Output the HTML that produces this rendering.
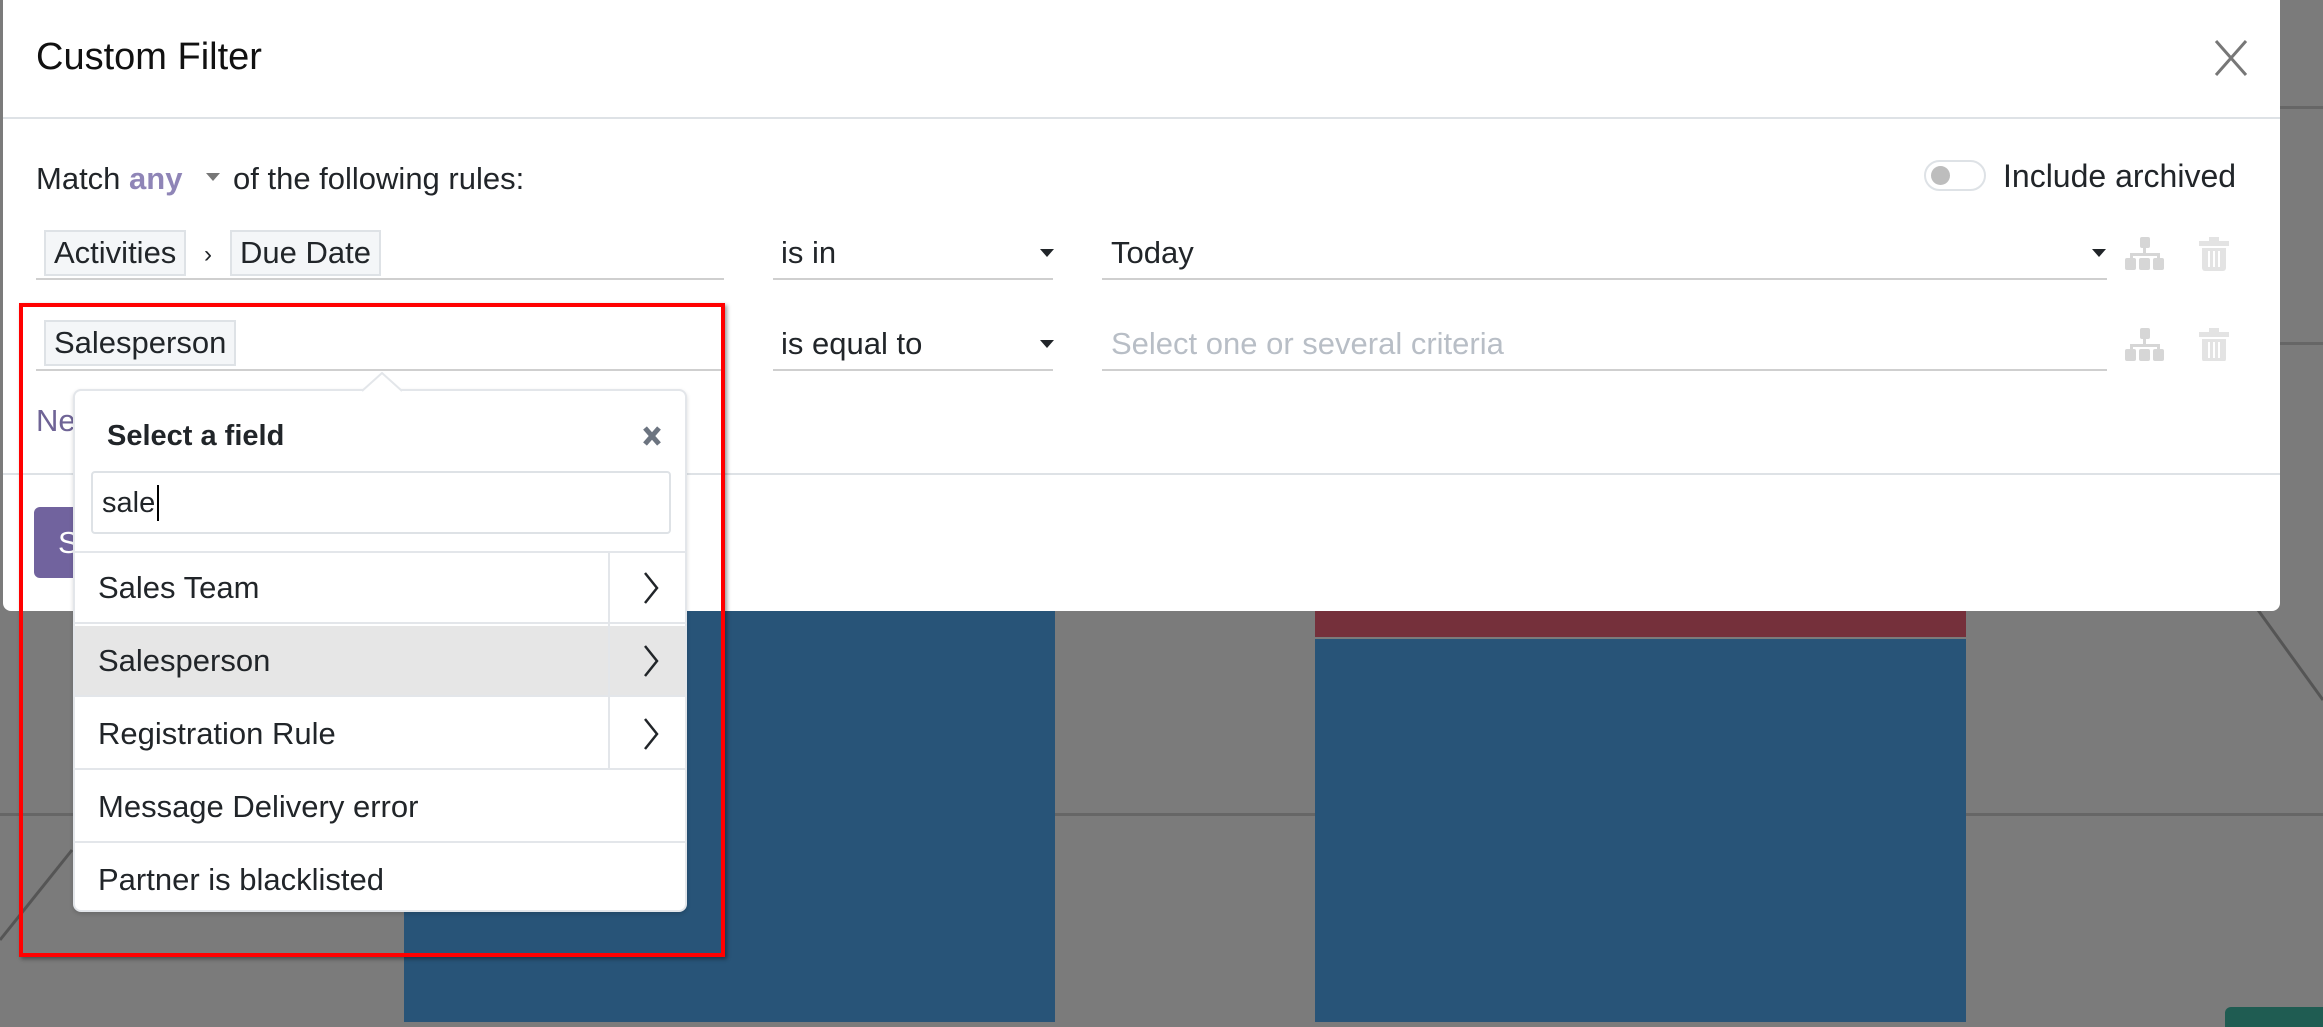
<!DOCTYPE html>
<html><head><meta charset="utf-8"><style>
*{box-sizing:border-box;margin:0;padding:0}
body{width:2323px;height:1022px;background:#7b7b7b;position:relative;overflow:hidden;font-family:"Liberation Sans",sans-serif;color:#212529}
.a{position:absolute}
.t{position:absolute;white-space:nowrap;line-height:1}
.tag{position:absolute;background:#f4f6f8;border:2px solid #dee2e6;font-size:31px;line-height:42px;padding:0 8px;white-space:nowrap}
.ul{position:absolute;height:2px;background:#cfcfcf}
.tri{position:absolute;width:0;height:0;border-left:7px solid transparent;border-right:7px solid transparent;border-top:8px solid #212529}
.item{position:absolute;left:0;width:613px;height:71px;border-bottom:2px solid #e3e6ea;font-size:31px;padding-left:23px;line-height:70px}
</style></head><body>
<!-- background chart -->
<div class="a" style="left:0;top:813px;width:2323px;height:3px;background:#666"></div>
<div class="a" style="left:2280px;top:342px;width:43px;height:3px;background:#666"></div>
<div class="a" style="left:2280px;top:106px;width:43px;height:3px;background:#666"></div>
<div class="a" style="left:404px;top:610px;width:651px;height:412px;background:#285478"></div>
<div class="a" style="left:1315px;top:610px;width:651px;height:27px;background:#75303b"></div>
<div class="a" style="left:1315px;top:639px;width:651px;height:383px;background:#285478"></div>
<div class="a" style="left:2225px;top:1007px;width:98px;height:20px;background:#1f5c52;border-radius:6px 0 0 0"></div>
<svg class="a" style="left:0;top:0" width="2323" height="1022"><line x1="0" y1="940" x2="72" y2="850" stroke="#555" stroke-width="3"/><line x1="2258" y1="610" x2="2323" y2="700" stroke="#555" stroke-width="3"/></svg>

<!-- modal -->
<div class="a" style="left:3px;top:0;width:2277px;height:611px;background:#fff;border-radius:0 0 8px 8px"></div>
<div class="t" style="left:36px;top:38px;font-size:38px;color:#111">Custom Filter</div>
<svg class="a" style="left:2213px;top:40px" width="36" height="36"><path d="M3 1L33 35M33 1L3 35" stroke="#777" stroke-width="3"/></svg>
<div class="a" style="left:3px;top:117px;width:2277px;height:2px;background:#dee2e6"></div>

<div class="t" style="left:36px;top:163px;font-size:31px">Match <b style="color:#8f85b7">any</b></div>
<div class="tri" style="left:206px;top:173px;border-top-color:#777"></div>
<div class="t" style="left:233px;top:163px;font-size:31px">of the following rules:</div>

<div class="a" style="left:1924px;top:160px;width:62px;height:31px;border:2px solid #dee2e6;border-radius:16px"></div>
<div class="a" style="left:1931px;top:166px;width:19px;height:19px;border-radius:50%;background:#bdbdbd"></div>
<div class="t" style="left:2003px;top:160px;font-size:32px">Include archived</div>

<!-- row1 -->
<div class="tag" style="left:44px;top:230px">Activities</div>
<div class="t" style="left:204px;top:243px;font-size:24px">›</div>
<div class="tag" style="left:230px;top:230px">Due Date</div>
<div class="ul" style="left:36px;top:278px;width:688px"></div>
<div class="t" style="left:781px;top:237px;font-size:31px">is in</div>
<div class="tri" style="left:1040px;top:249px"></div>
<div class="ul" style="left:773px;top:278px;width:280px"></div>
<div class="t" style="left:1111px;top:237px;font-size:31px">Today</div>
<div class="tri" style="left:2092px;top:249px"></div>
<div class="ul" style="left:1102px;top:278px;width:1005px"></div>

<!-- row2 -->
<div class="tag" style="left:44px;top:320px">Salesperson</div>
<div class="ul" style="left:36px;top:369px;width:688px"></div>
<div class="t" style="left:781px;top:328px;font-size:31px">is equal to</div>
<div class="tri" style="left:1040px;top:340px"></div>
<div class="ul" style="left:773px;top:369px;width:280px"></div>
<div class="t" style="left:1111px;top:328px;font-size:31px;color:#b8bec6">Select one or several criteria</div>
<div class="ul" style="left:1102px;top:369px;width:1005px"></div>

<!-- icons -->
<svg class="a" style="left:2125px;top:237px" width="40" height="124">
<g fill="#d6d6d6"><rect x="15" y="0" width="10" height="11" rx="2"/><rect x="18" y="10" width="3" height="8"/><rect x="5" y="16" width="30" height="3"/><rect x="5" y="16" width="3" height="6"/><rect x="32" y="16" width="3" height="6"/>
<rect x="0" y="21" width="11" height="12" rx="2"/><rect x="14" y="21" width="11" height="12" rx="2"/><rect x="28" y="21" width="11" height="12" rx="2"/></g>
<g fill="#d6d6d6" transform="translate(0,91)"><rect x="15" y="0" width="10" height="11" rx="2"/><rect x="18" y="10" width="3" height="8"/><rect x="5" y="16" width="30" height="3"/><rect x="5" y="16" width="3" height="6"/><rect x="32" y="16" width="3" height="6"/>
<rect x="0" y="21" width="11" height="12" rx="2"/><rect x="14" y="21" width="11" height="12" rx="2"/><rect x="28" y="21" width="11" height="12" rx="2"/></g></svg>
<svg class="a" style="left:2199px;top:237px" width="32" height="124">
<g fill="#e3e3e3"><path d="M10 0h10v4h10v5H0V4h10z"/><path d="M3 11h24v20a3 3 0 0 1-3 3H6a3 3 0 0 1-3-3z"/></g><g fill="#fff"><rect x="9" y="14" width="2" height="16"/><rect x="14" y="14" width="2" height="16"/><rect x="19" y="14" width="2" height="16"/></g>
<g transform="translate(0,91)"><g fill="#e3e3e3"><path d="M10 0h10v4h10v5H0V4h10z"/><path d="M3 11h24v20a3 3 0 0 1-3 3H6a3 3 0 0 1-3-3z"/></g><g fill="#fff"><rect x="9" y="14" width="2" height="16"/><rect x="14" y="14" width="2" height="16"/><rect x="19" y="14" width="2" height="16"/></g></g></svg>

<div class="t" style="left:36px;top:405px;font-size:31px;color:#6f6496">New Rule</div>
<div class="a" style="left:3px;top:473px;width:2277px;height:2px;background:#dee2e6"></div>
<div class="a" style="left:34px;top:507px;width:160px;height:71px;background:#71639e;border-radius:6px"></div>
<div class="t" style="left:58px;top:527px;font-size:31px;color:#fff">Search</div>

<!-- red highlight -->
<div class="a" style="left:19px;top:303px;width:706px;height:654px;border:4px solid #f00;box-shadow:2px 2px 4px rgba(0,0,0,.4)"></div>

<!-- popover -->
<div class="a" style="left:73px;top:389px;width:614px;height:523px;background:#fff;border:2px solid #e3e6ea;border-radius:8px;box-shadow:0 2px 4px rgba(0,0,0,.15);overflow:hidden">
 <div class="t" style="left:32px;top:31px;font-size:29px;font-weight:bold">Select a field</div>
 <svg class="a" style="left:567px;top:34px" width="20" height="22"><path d="M3 3L17 19M17 3L3 19" stroke="#6c7480" stroke-width="5"/></svg>
 <div class="a" style="left:16px;top:80px;width:580px;height:63px;border:2px solid #dee2e6;border-radius:4px"></div>
 <div class="t" style="left:27px;top:98px;font-size:29px">sale</div>
 <div class="a" style="left:82px;top:94px;width:2px;height:36px;background:#000"></div>
 <div class="a" style="left:0;top:160px;width:614px;height:2px;background:#e3e6ea"></div>
 <div class="item" style="top:162px">Sales Team</div>
 <div class="item" style="top:235px;background:#e6e6e6">Salesperson</div>
 <div class="item" style="top:308px">Registration Rule</div>
 <div class="item" style="top:381px">Message Delivery error</div>
 <div class="item" style="top:454px">Partner is blacklisted</div>
 <div class="a" style="left:533px;top:162px;width:2px;height:217px;background:#e3e6ea"></div>
 <svg class="a" style="left:560px;top:162px" width="30" height="220"><g fill="none" stroke="#212529" stroke-width="2.5"><path d="M10 20L22 35L10 50"/><path d="M10 93L22 108L10 123"/><path d="M10 166L22 181L10 196"/></g></svg>
</div>
<svg class="a" style="left:362px;top:372px" width="42" height="20"><path d="M0 19L20 1L40 19" fill="#fff" stroke="#e3e6ea" stroke-width="2"/></svg>
</body></html>
